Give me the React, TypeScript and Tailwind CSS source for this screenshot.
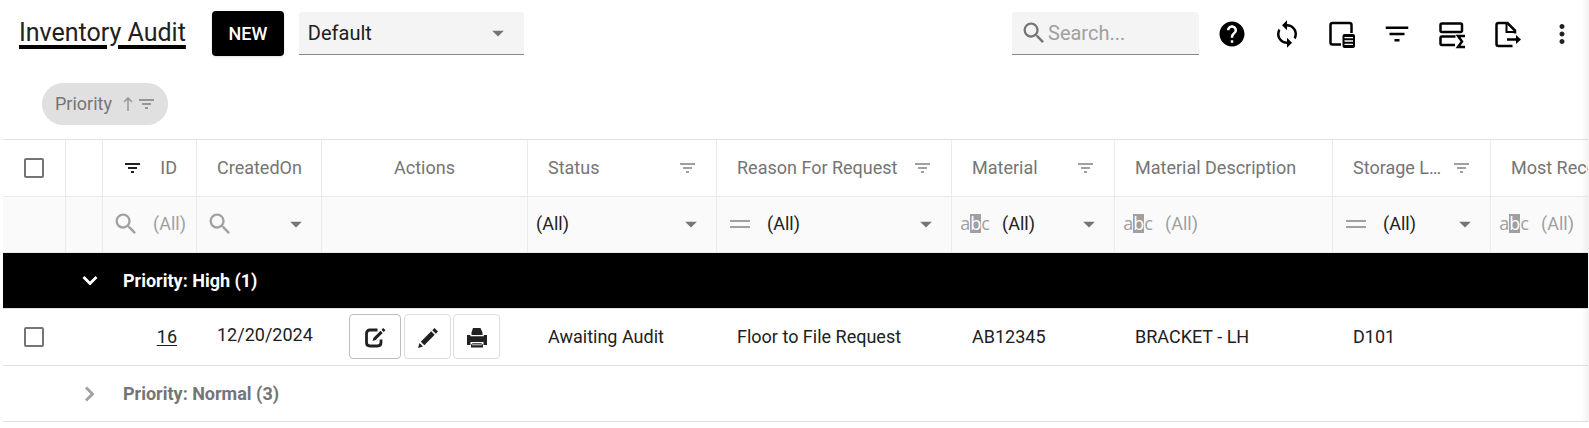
import React from "react";
import {
  MdArrowDropDown,
  MdFilterList,
  MdHelp,
  MdMoreVert,
  MdSearch,
  MdSync,
} from "react-icons/md";

type Operator = "search" | "equals" | "contains";

type Column = {
  key: string;
  title: string;
  width: string;
  align?: "left" | "right" | "center";
  headerFilter?: "idle" | "active";
  operator?: Operator;
  editor?: "text" | "select" | "date";
};

const columns: Column[] = [
  { key: "id", title: "ID", width: "w-[94px]", align: "right", headerFilter: "active", operator: "search", editor: "text" },
  { key: "createdOn", title: "CreatedOn", width: "w-[125px]", operator: "search", editor: "date" },
  { key: "actions", title: "Actions", width: "w-[206px]", align: "center" },
  { key: "status", title: "Status", width: "w-[189px]", headerFilter: "idle", editor: "select" },
  { key: "reason", title: "Reason For Request", width: "w-[235px]", headerFilter: "idle", operator: "equals", editor: "select" },
  { key: "material", title: "Material", width: "w-[163px]", headerFilter: "idle", operator: "contains", editor: "select" },
  { key: "description", title: "Material Description", width: "w-[218px]", operator: "contains", editor: "text" },
  { key: "storage", title: "Storage Location", width: "w-[158px]", headerFilter: "idle", operator: "equals", editor: "select" },
  { key: "recent", title: "Most Recent", width: "", operator: "contains", editor: "text" },
];

function FilterIcon({ className = "" }: { className?: string }) {
  return (
    <svg viewBox="0 0 15 10" className={`h-[10px] w-[15px] shrink-0 fill-current ${className}`} aria-hidden="true">
      <path d="M0 0h15v2H0zM3 4h9v2H3zM6 8h3v2H6z" />
    </svg>
  );
}

function Checkbox({ label }: { label: string }) {
  return (
    <input
      type="checkbox"
      aria-label={label}
      className="mx-auto block size-5 appearance-none rounded-xs border-2 border-[#757575] bg-white checked:bg-black"
    />
  );
}

function OperatorIcon({ operator }: { operator: Operator }) {
  return (
    <span className="flex w-[46px] shrink-0 items-center justify-center text-[#a0a0a0]">
      {operator === "search" && <MdSearch className="size-7" />}
      {operator === "equals" && (
        <svg viewBox="0 0 20 8" className="h-2 w-5 fill-current" aria-hidden="true">
          <path d="M0 0h20v2H0zM0 6h20v2H0z" />
        </svg>
      )}
      {operator === "contains" && (
        <span className="flex items-center font-['Open_Sans',sans-serif] text-lg leading-[19px]">
          a<span className="bg-[#a0a0a0] text-white">b</span>c
        </span>
      )}
    </span>
  );
}

function FilterCell({ column }: { column: Column }) {
  const { editor, operator, title, align } = column;
  if (!editor) return null;
  return (
    <div className="relative flex h-[55px] items-center pb-0.5">
      {operator && <OperatorIcon operator={operator} />}
      {editor === "select" ? (
        <select
          aria-label={`Filter ${title}`}
          className={`h-full min-w-0 flex-1 appearance-none bg-transparent text-[#212121] ${operator ? "pl-1" : "pl-2"}`}
        >
          <option>(All)</option>
        </select>
      ) : (
        <input
          type="text"
          aria-label={`Filter ${title}`}
          placeholder={editor === "text" ? "(All)" : ""}
          className={`h-full min-w-0 flex-1 bg-transparent pl-1 placeholder:text-[#a0a0a0] ${align === "right" ? "pr-[10px] text-right" : ""}`}
        />
      )}
      {editor !== "text" && (
        <MdArrowDropDown className="pointer-events-none absolute right-[11px] size-7 text-[#757575]" />
      )}
    </div>
  );
}

function ToolbarButton({ label, children }: { label: string; children: React.ReactNode }) {
  return (
    <button type="button" aria-label={label} className="flex size-[30px] items-center justify-center">
      {children}
    </button>
  );
}

function Toolbar() {
  return (
    <header className="flex h-[67px] items-center pr-3 pl-[19px]">
      <h1 className="text-[25px] text-[#212121] underline decoration-black decoration-4 underline-offset-4">
        Inventory Audit
      </h1>
      <button
        type="button"
        className="ml-[26px] h-[45px] w-[72px] rounded bg-black text-lg font-medium text-white shadow"
      >
        NEW
      </button>
      <div className="relative ml-[15px] flex h-[43px] w-[225px] items-center rounded-t border-b border-[#8a8a8a] bg-[#f4f4f4]">
        <select aria-label="Layout" className="h-full w-full appearance-none pl-[9px] text-xl text-[#212121]">
          <option>Default</option>
        </select>
        <MdArrowDropDown className="pointer-events-none absolute right-[12px] size-7 text-[#757575]" />
      </div>
      <label className="ml-auto flex h-[43px] w-[187px] items-center rounded-t border-b border-[#8a8a8a] bg-[#f4f4f4] pl-2">
        <MdSearch className="size-7 shrink-0 text-[#757575]" />
        <input
          type="text"
          aria-label="Search"
          placeholder="Search..."
          className="w-full min-w-0 bg-transparent text-xl placeholder:text-[#a0a0a0]"
        />
      </label>
      <div className="ml-[18px] flex gap-[25px] text-black">
        <ToolbarButton label="Help">
          <MdHelp className="size-[30px]" />
        </ToolbarButton>
        <ToolbarButton label="Refresh">
          <MdSync className="size-[30px]" />
        </ToolbarButton>
        <ToolbarButton label="Column chooser">
          <svg viewBox="0 0 30 30" className="size-[30px]" aria-hidden="true">
            <path d="M14 25.500H5.500Q3.500 25.500 3.500 23.500V6Q3.500 4 5.500 4H22.500Q24.500 4 24.500 6V14" fill="none" stroke="currentColor" strokeWidth="2.500" />
            <rect x="15.500" y="15" width="12.500" height="14" rx="2" fill="currentColor" />
            <path d="M17.500 18.700h8.500M17.500 22h8.500M17.500 25.300h8.500" stroke="white" strokeWidth="1.300" />
          </svg>
        </ToolbarButton>
        <ToolbarButton label="Filter">
          <MdFilterList className="size-[30px]" />
        </ToolbarButton>
        <ToolbarButton label="Summary">
          <svg viewBox="0 0 30 30" className="size-[30px]" fill="none" stroke="currentColor" strokeWidth="2.500" aria-hidden="true">
            <rect x="3.500" y="4.500" width="21.500" height="8.500" rx="1.500" />
            <path d="M18.500 17.500H5Q3.500 17.500 3.500 19V24.500Q3.500 26 5 26H18" />
            <path d="M28 17H21L25 22.500L21 28H28" />
          </svg>
        </ToolbarButton>
        <ToolbarButton label="Export">
          <svg viewBox="0 0 30 30" className="size-[30px]" fill="none" stroke="currentColor" strokeWidth="2.500" aria-hidden="true">
            <path d="M20.500 27H6.500Q4.500 27 4.500 25V6Q4.500 4 6.500 4H15.500L23 11.500V14.500" />
            <path d="M14.500 4V13H23" strokeWidth="2" />
            <path d="M15 20.500H26" />
            <path d="M24 16L29 20.500L24 25Z" fill="currentColor" stroke="none" />
          </svg>
        </ToolbarButton>
        <ToolbarButton label="More">
          <MdMoreVert className="size-[30px] text-[#212121]" />
        </ToolbarButton>
      </div>
    </header>
  );
}

function HeaderCell({ column }: { column: Column }) {
  const icon = column.headerFilter && (
    <FilterIcon className={column.headerFilter === "active" ? "text-[#212121]" : "text-[#a0a0a0]"} />
  );
  if (column.align === "right") {
    return (
      <div className="flex items-center justify-end gap-5 pr-[19px]">
        {icon}
        <span>{column.title}</span>
      </div>
    );
  }
  if (column.align === "center") return <div className="text-center">{column.title}</div>;
  return (
    <div className="flex items-center justify-between gap-1 pr-[21px] pl-5">
      <span className={icon ? "truncate" : "whitespace-nowrap"}>{column.title}</span>
      {icon}
    </div>
  );
}

function GroupRow({ title, expanded }: { title: string; expanded?: boolean }) {
  return (
    <tr className={expanded ? "bg-black text-white" : "text-[#757575]"}>
      <td className="h-14 border-b border-[#e0e0e0]" />
      <td className="border-b border-[#e0e0e0] pr-px">
        <button type="button" aria-label={title} aria-expanded={!!expanded} className="ml-auto flex w-6 justify-center">
          <svg viewBox="0 0 16 16" className={`size-4 ${expanded ? "" : "-rotate-90 text-[#a0a0a0]"}`} aria-hidden="true">
            <path d="M1.500 4L8 10.500L14.500 4" fill="none" stroke="currentColor" strokeWidth="2.800" />
          </svg>
        </button>
      </td>
      <td colSpan={9} className="border-b border-[#e0e0e0] pl-5 font-bold">
        {title}
      </td>
    </tr>
  );
}

export default function App() {
  return (
    <main className="relative overflow-hidden bg-white font-[Roboto,sans-serif] text-lg text-[#212121]">
      <Toolbar />
      <div className="flex h-[72px] items-center pl-[42px]">
        <button type="button" className="mt-0.5 flex h-[42px] items-center rounded-full bg-[#e0e0e0] pr-[14px] pl-[13px] text-[#757575]">
          Priority
          <svg viewBox="0 0 10 14" className="ml-[11px] h-[14px] w-[10px]" fill="none" stroke="#959595" strokeWidth="1.500" aria-hidden="true">
            <path d="M5 14V1M1 5L5 1L9 5" />
          </svg>
          <FilterIcon className="ml-[6px] text-[#959595]" />
        </button>
      </div>
      <div className="mr-px ml-[3px] border-t border-[#e0e0e0]">
        <table className="w-full table-fixed border-separate border-spacing-0">
          <colgroup>
            <col className="w-[63px]" />
            <col className="w-[37px]" />
            {columns.map((column) => (
              <col key={column.key} className={column.width} />
            ))}
          </colgroup>
          <thead className="text-left text-[#757575]">
            <tr>
              <th className="h-[57px] border-r border-b border-[#ebebeb]">
                <Checkbox label="Select all" />
              </th>
              <th className="border-r border-b border-[#ebebeb]" />
              {columns.map((column) => (
                <th key={column.key} className="overflow-hidden border-r border-b border-[#ebebeb] font-normal last:border-r-0">
                  <HeaderCell column={column} />
                </th>
              ))}
            </tr>
            <tr className="bg-[#fafafa]">
              <td className="h-14 border-r border-b border-[#ebebeb]" />
              <td className="border-r border-b border-[#ebebeb]" />
              {columns.map((column) => (
                <td key={column.key} className="overflow-hidden border-r border-b border-[#ebebeb] last:border-r-0">
                  <FilterCell column={column} />
                </td>
              ))}
            </tr>
          </thead>
          <tbody>
            <GroupRow title="Priority: High (1)" expanded />
            <tr className="*:border-b *:border-[#e0e0e0]">
              <td className="h-[57px] pr-px">
                <Checkbox label="Select row 16" />
              </td>
              <td />
              <td className="pr-5 text-right">
                <a href="#16" className="underline underline-offset-2">
                  16
                </a>
              </td>
              <td className="pb-1 pl-5">12/20/2024</td>
              <td className="pb-0.5 pl-[27px]">
                <div className="flex">
                  <button type="button" aria-label="Open" className="flex h-[45px] w-[52px] items-center justify-center rounded border border-[#bdbdbd]">
                    <svg viewBox="0 0 22 22" className="mt-1 size-[22px]" aria-hidden="true">
                      <path d="M13.500 3H6Q2.500 3 2.500 6.500V15.500Q2.500 19 6 19H13.500Q17 19 17 15.500V12.500" fill="none" stroke="currentColor" strokeWidth="2.800" />
                      <path d="M8.500 14L9.500 10.800L16.500 3.800L18.700 6L11.700 13ZM17.500 2.800L19.300 1L21.500 3.200L19.700 5Z" fill="currentColor" />
                    </svg>
                  </button>
                  <button type="button" aria-label="Edit" className="ml-[3px] flex h-[45px] w-[47px] items-center justify-center rounded border border-[#dddddd]">
                    <svg viewBox="0 0 22 22" className="mt-1 size-[22px] fill-current" aria-hidden="true">
                      <path d="M1 21L2.500 16L6 19.500ZM3.800 14.700L14.200 4.300L17.700 7.800L7.300 18.200ZM15.300 3.200L17.500 1L21 4.500L18.800 6.700Z" />
                    </svg>
                  </button>
                  <button type="button" aria-label="Print" className="ml-[2px] flex h-[45px] w-[47px] items-center justify-center rounded border border-[#dddddd]">
                    <svg viewBox="0 0 22 22" className="mt-1 size-[22px] fill-current" aria-hidden="true">
                      <path d="M7 1H14.500L16.500 5.500V8H5.500V5.500ZM1 8H4.300V9.300H17.700V8H21V18H17.500V15H4.500V18H1ZM6.500 16.300H15.500L17 17.800V20.500H5V17.800Z" />
                      <path d="M6 17.800H16" stroke="white" strokeWidth="0.800" />
                    </svg>
                  </button>
                </div>
              </td>
              <td className="pl-5">Awaiting Audit</td>
              <td className="pl-5">Floor to File Request</td>
              <td className="pl-5">AB12345</td>
              <td className="pl-5">BRACKET - LH</td>
              <td className="pl-5">D101</td>
              <td />
            </tr>
            <GroupRow title="Priority: Normal (3)" />
          </tbody>
        </table>
      </div>
      <div className="pointer-events-none absolute inset-y-0 right-0 w-2 bg-linear-to-l from-black/5 to-transparent" />
    </main>
  );
}
